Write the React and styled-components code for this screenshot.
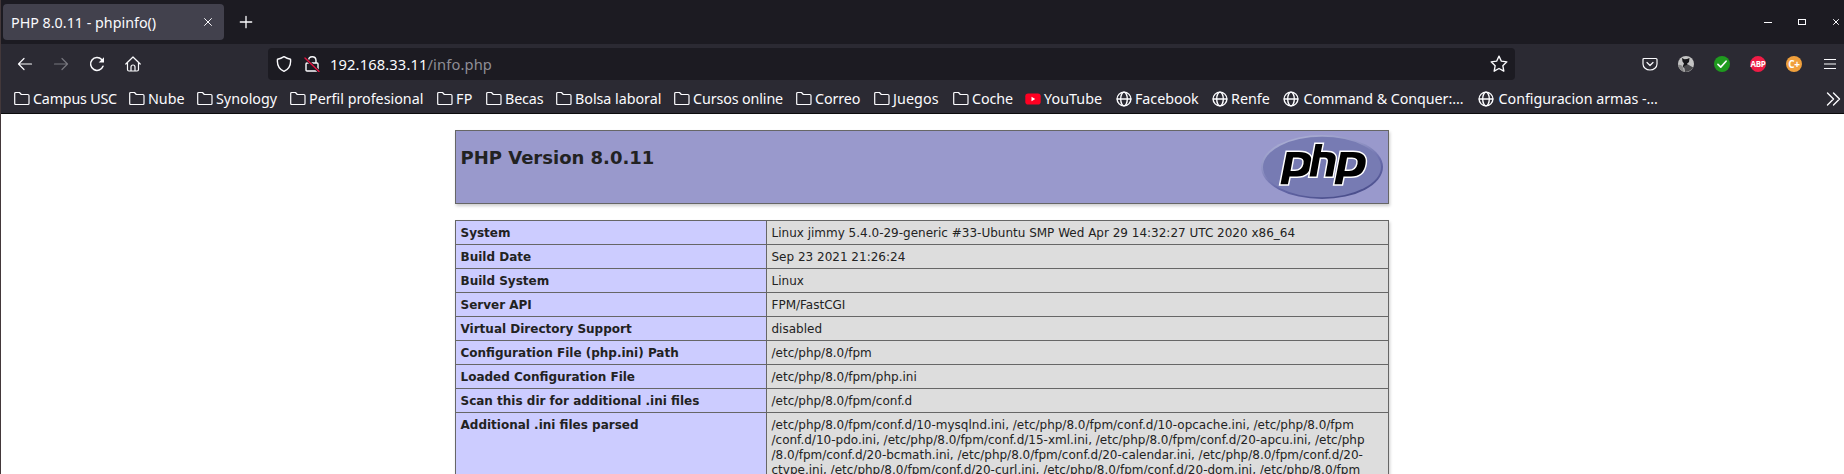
import React from "react";
import styled, { createGlobalStyle } from "styled-components";

const Global = createGlobalStyle`
  * { box-sizing: border-box; }
  html, body { margin: 0; background: #fff; overflow: hidden; }
`;

const Window = styled.div`
  width: 1844px; height: 474px; overflow: hidden;
  display: flex; flex-direction: column;
  border-left: 1px solid #43383a;
  background: #fff;
  font-family: "Noto Sans", "Open Sans", sans-serif;
  color: #fbfbfe;
`;
const TabStrip = styled.header`
  flex: none; height: 44px; background: #1c1b22;
  display: flex; align-items: center; padding: 0 4px 0 2px;
`;
const Tab = styled.div`
  width: 221px; height: 36px; border-radius: 4px; background: #42414d;
  display: flex; align-items: center; justify-content: space-between;
  padding: 0 11px 0 8px; font-size: 14.3px; white-space: nowrap;
`;
const NewTab = styled.div`margin-left: 15px; display: flex; flex: 1;`;
const WindowControls = styled.div`display: flex; align-items: center; gap: 26px;`;

const NavBar = styled.nav`
  flex: none; height: 36px; background: #2b2a33;
  display: flex; align-items: center; padding: 4px 6px 0 16px;
`;
const NavButtons = styled.div`
  width: 251px; display: flex; gap: 20px; align-items: center;
`;
const UrlBar = styled.div`
  width: 1247px; height: 32px; border-radius: 4px; background: #1c1b22;
  display: flex; align-items: center; padding: 0 7px 0 8px;
`;
const UrlIcons = styled.div`display: flex; gap: 12px; width: 54px;`;
const Url = styled.div`
  flex: 1; font-size: 14.7px; color: #fbfbfe; letter-spacing: 0.13px;
`;
const UrlPath = styled.span`color: #8f8e96;`;
const Extensions = styled.div`
  flex: 1; display: flex; align-items: center; justify-content: flex-end; gap: 20px;
`;
const Badge = styled.div`
  width: 16px; height: 16px; border-radius: 50%; background: ${(p) => p.$bg};
  clip-path: ${(p) => (p.$octagon ? "polygon(30% 0, 70% 0, 100% 30%, 100% 70%, 70% 100%, 30% 100%, 0 70%, 0 30%)" : "none")};
  display: flex; align-items: center; justify-content: center;
  font: 700 ${(p) => p.$size}px/16px "Open Sans", sans-serif; letter-spacing: -0.3px; color: #fff;
`;

const Bookmarks = styled.div`
  flex: none; height: 34px; background: #2b2a33; border-bottom: 1px solid #0c0c0d;
  display: flex; align-items: center; padding: 4px 3px 0 12.5px;
`;
const Bookmark = styled.div`
  width: ${(p) => p.$w}px; display: flex; align-items: center; gap: ${(p) => p.$gap || 3.5}px;
  font-size: 14.3px; letter-spacing: ${(p) => p.$track || 0}px; white-space: nowrap;
  line-height: 20px;
`;
const Overflow = styled.div`flex: 1; display: flex; justify-content: flex-end;`;

const Page = styled.main`
  flex: 1; padding: 16px 1px 0 0; display: flex; flex-direction: column; align-items: center;
  gap: 16px; font-family: "DejaVu Sans", sans-serif; color: #222;
`;
const Banner = styled.section`
  flex: none; width: 934px; height: 74px; border: 1px solid #666; background: #99c;
  box-shadow: 1px 2px 3px rgba(0, 0, 0, 0.2);
  display: flex; justify-content: space-between; padding: 4px 5px 4px 4.5px;
`;
const Version = styled.h1`
  margin: 12px 0 0; font-size: 18px; line-height: 21px; font-weight: 700;
`;
const InfoTable = styled.section`
  width: 934px; border: 1px solid #666; border-bottom: 0;
  box-shadow: 1px 2px 3px rgba(0, 0, 0, 0.2);
  font-size: 12px; line-height: 15px;
`;
const Row = styled.div`
  display: grid; grid-template-columns: 311px 1fr; border-bottom: 1px solid #666;
`;
const Name = styled.div`
  background: #ccf; border-right: 1px solid #666; padding: 5px 5px 3px 4.5px; font-weight: 700;
`;
const Value = styled.div`background: #ddd; padding: 5px 5px 3px 4.5px; white-space: pre;`;

const Icon = ({ s = 16, children, ...p }) => (
  <svg width={s} height={s} viewBox="0 0 16 16" fill="none" stroke="#fbfbfe"
    strokeWidth="1.2" strokeLinecap="round" strokeLinejoin="round" {...p}>
    {children}
  </svg>
);
const Folder = () => (
  <Icon><path d="M.7 12.5v-10q0-1 1-1h3.800l1.800 2h6.500q1.200 0 1.200 1.200v7.800q0 1-1 1h-12.300q-1 0-1-1z" /></Icon>
);
const Globe = () => (
  <Icon strokeWidth="1.400"><circle cx="8" cy="8" r="6.900" /><ellipse cx="8" cy="8" rx="3.300" ry="6.900" /><path d="M1.200 8h13.600" /></Icon>
);
const YouTube = () => (
  <Icon stroke="none"><rect x=".3" y="2.500" width="15.400" height="11" rx="2.800" fill="#f02" /><path d="M6.500 5.800v4.400L10.200 8z" fill="#fff" /></Icon>
);
const icons = { folder: Folder, globe: Globe, youtube: YouTube };

const bookmarks = [
  ["folder", "Campus USC", 115, -0.2], ["folder", "Nube", 68], ["folder", "Synology", 93],
  ["folder", "Perfil profesional", 147], ["folder", "FP", 49, 0.3], ["folder", "Becas", 70, -0.15],
  ["folder", "Bolsa laboral", 118, -0.03], ["folder", "Cursos online", 122, -0.12], ["folder", "Correo", 78, -0.1],
  ["folder", "Juegos", 79, 0.1], ["folder", "Coche", 72, -0.1], ["youtube", "YouTube", 91, 0.05],
  ["globe", "Facebook", 96, -0.05], ["globe", "Renfe", 71], ["globe", "Command & Conquer:…", 195, -0.07, 5],
  ["globe", "Configuracion armas -…", 200, -0.03, 5],
];

const rows = [
  ["System", "Linux jimmy 5.4.0-29-generic #33-Ubuntu SMP Wed Apr 29 14:32:27 UTC 2020 x86_64"],
  ["Build Date", "Sep 23 2021 21:26:24"],
  ["Build System", "Linux"],
  ["Server API", "FPM/FastCGI"],
  ["Virtual Directory Support", "disabled"],
  ["Configuration File (php.ini) Path", "/etc/php/8.0/fpm"],
  ["Loaded Configuration File", "/etc/php/8.0/fpm/php.ini"],
  ["Scan this dir for additional .ini files", "/etc/php/8.0/fpm/conf.d"],
  ["Additional .ini files parsed",
    "/etc/php/8.0/fpm/conf.d/10-mysqlnd.ini, /etc/php/8.0/fpm/conf.d/10-opcache.ini, /etc/php/8.0/fpm\n" +
    "/conf.d/10-pdo.ini, /etc/php/8.0/fpm/conf.d/15-xml.ini, /etc/php/8.0/fpm/conf.d/20-apcu.ini, /etc/php\n" +
    "/8.0/fpm/conf.d/20-bcmath.ini, /etc/php/8.0/fpm/conf.d/20-calendar.ini, /etc/php/8.0/fpm/conf.d/20-\n" +
    "ctype.ini, /etc/php/8.0/fpm/conf.d/20-curl.ini, /etc/php/8.0/fpm/conf.d/20-dom.ini, /etc/php/8.0/fpm"],
];

const stemAndBowl = "M6.300 0H18.500Q33 0 31 12Q29 24.500 16.500 24.500H9L7.400 32.300H0ZM12.500 5.500L10 19H14.500Q21.500 19 23 12Q24.500 5.500 17.500 5.500Z";

const PhpLogo = () => (
  <svg width="122" height="64" viewBox="0 0 122 64">
    <defs>
      <linearGradient id="rim" x1="0.200" y1="0" x2="0.700" y2="1">
        <stop offset="0" stopColor="#aeb2d5" /><stop offset=".35" stopColor="#9093c4" />
        <stop offset=".65" stopColor="#6568a8" /><stop offset="1" stopColor="#484c89" />
      </linearGradient>
    </defs>
    <ellipse cx="61" cy="32" rx="61" ry="32" fill="url(#rim)" />
    <ellipse cx="61" cy="32" rx="59" ry="30.200" fill="#777bb3" />
    <g fill="#000" fillRule="evenodd" stroke="#fff" strokeWidth="3" paintOrder="stroke">
      <path d={stemAndBowl} transform="translate(19.500 17)" />
      <path d={stemAndBowl} transform="translate(73.500 17)" />
      <path transform="translate(.5 0)" d="M54 9H61L59.400 17H65Q75.500 17 74 25L71 41.500H63.800L66.300 27.500Q67.300 22.500 62.500 22.500H58.300L54.900 41.500H48Z" />
    </g>
  </svg>
);

const Star = () => (
  <Icon s={18}><path d="M8 1l2.100 4.500 4.900.6-3.600 3.400.9 4.900L8 12l-4.300 2.400.9-4.900L1 6.100l4.900-.6z" /></Icon>
);

const Avatar = () => (
  <Icon stroke="none">
    <circle cx="8" cy="8" r="8" fill="#c4c4c4" />
    <path d="M0 9q3-1 5 2l1 4.700Q1 14 0 9z" fill="#888" />
    <path d="M4 2l2.500 1.200 2.500-.2 2.500-1-.5 4-2 1.700 1.500 2.300-1.500 2.500-3.500-1Q4.500 9.500 6 7.500L4.500 5.500z" fill="#17171a" />
    <path d="M6 10l4-1.500 5.200 3Q13 15.500 7 15.900z" fill="#4a4a4d" />
  </Icon>
);

export default function App() {
  return (
    <>
      <Global />
      <Window>
        <TabStrip>
          <Tab>
            <span>PHP 8.0.11 - phpinfo()</span>
            <Icon s={10}><path d="M2.500 2.500l11 11M13.500 2.500l-11 11" strokeWidth="1.600" /></Icon>
          </Tab>
          <NewTab><Icon s={14}><path d="M8 1.500v13M1.500 8h13" strokeWidth="1.500" /></Icon></NewTab>
          <WindowControls>
            <Icon s={8}><path d="M0 9h16" strokeWidth="2" strokeLinecap="butt" /></Icon>
            <Icon s={8}><rect x="1" y="3" width="14" height="10" strokeWidth="2" strokeLinejoin="miter" /></Icon>
            <Icon s={8}><path d="M3 3l10 10M13 3L3 13" strokeWidth="2" /></Icon>
          </WindowControls>
        </TabStrip>
        <NavBar>
          <NavButtons>
            <Icon><path d="M1.500 8h13M7 2.500L1.500 8 7 13.500" /></Icon>
            <Icon stroke="#77767e"><path d="M1.500 8h13M9 2.500L14.500 8 9 13.500" /></Icon>
            <Icon><path d="M14 10.200A6.400 6.400 0 1 1 12.700 3.600" strokeWidth="1.500" /><path d="M15 1.200V6.500H9.700z" fill="#fbfbfe" stroke="none" /></Icon>
            <Icon><path d="M.8 8L8 1l7.200 7M2.500 7v6.500q0 1.500 1.500 1.500h8q1.500 0 1.500-1.500V7M6 15v-4q0-2 2-2t2 2v4" /></Icon>
          </NavButtons>
          <UrlBar>
            <UrlIcons>
              <Icon><path d="M8 .7q3 2 6.500 2.500Q15.500 12 8 15.300.5 12 1.500 3.200 5 2.700 8 .7z" strokeWidth="1.400" /></Icon>
              <Icon><path d="M4.500 7V4.500q0-3.800 3.700-3.800T12 4.500V7M3 7h10q1 0 1 1V14q0 1-1 1H3q-1 0-1-1V8q0-1 1-1z" strokeWidth="1.400" /><path d="M1.500 2.500l13 12.500" stroke="#1c1b22" strokeWidth="3" /><path d="M1 2l14 13.500" stroke="#e2123f" strokeWidth="1.400" /></Icon>
            </UrlIcons>
            <Url>192.168.33.11<UrlPath>/info.php</UrlPath></Url>
            <Star />
          </UrlBar>
          <Extensions>
            <Icon><path d="M2 2.500h12q1 0 1 1V8a7 6 0 0 1-14 0V3.500q0-1 1-1zM5 6.500L8 9.500l3-3" /></Icon>
            <Avatar />
            <Badge $bg="#1f9a1f"><Icon s={10}><path d="M1.500 8.500l4.500 4.500L14.500 3.500" strokeWidth="2.600" /></Icon></Badge>
            <Badge $bg="#ee1c46" $octagon $size={8}>ABP</Badge>
            <Badge $bg="#f0a03c" $size={10}>C+</Badge>
            <Icon strokeLinecap="butt"><path d="M2 3.500h12M2 8h12M2 12.500h12" /></Icon>
          </Extensions>
        </NavBar>
        <Bookmarks>
          {bookmarks.map(([kind, label, w, track, gap]) => {
            const Glyph = icons[kind];
            return <Bookmark key={label} $w={w} $track={track} $gap={gap}><Glyph />{label}</Bookmark>;
          })}
          <Overflow><Icon><path d="M2.500 2l6 6-6 6M8.500 2l6 6-6 6" strokeWidth="1.400" /></Icon></Overflow>
        </Bookmarks>
        <Page>
          <Banner><Version>PHP Version 8.0.11</Version><PhpLogo /></Banner>
          <InfoTable>
            {rows.map(([n, v]) => <Row key={n}><Name>{n}</Name><Value>{v}</Value></Row>)}
          </InfoTable>
        </Page>
      </Window>
    </>
  );
}
